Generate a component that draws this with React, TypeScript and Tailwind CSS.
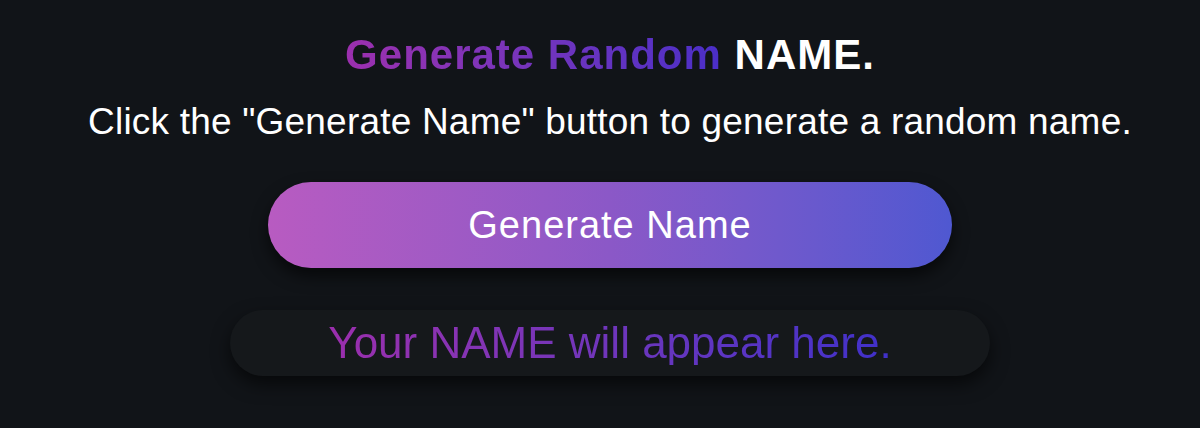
export default function App() {
  return (
    <div className="min-h-[428px] w-full bg-[#111418] flex flex-col items-center pt-[34px] pl-[20px]" style={{ fontFamily: '"Liberation Sans", Arial, sans-serif' }}>
      <h1 className="text-[42px] font-bold leading-[42px] tracking-[1px] text-white">
        <span className="bg-gradient-to-r from-[#9c2fae] to-[#4a2ec8] bg-clip-text text-transparent">Generate Random</span> NAME.
      </h1>
      <p className="mt-[27px] text-[37px] leading-[37px] tracking-[0.2px] text-white">Click the "Generate Name" button to generate a random name.</p>
      <button className="mt-[42px] w-[684px] h-[86px] rounded-[43px] bg-gradient-to-r from-[#b85bc1] via-[#8b58c7] to-[#4f58d1] text-white text-[38px] tracking-[1px] leading-none shadow-[0_8px_16px_rgba(0,0,0,0.6)]">
        Generate Name
      </button>
      <div className="mt-[42px] w-[760px] h-[66px] rounded-[33px] bg-[#15181b] flex items-center justify-center shadow-[0_8px_18px_rgba(0,0,0,0.6)]">
        <span className="text-[44px] leading-none bg-gradient-to-r from-[#9b2ead] to-[#3f30ca] bg-clip-text text-transparent">Your NAME will appear here.</span>
      </div>
    </div>
  );
}
